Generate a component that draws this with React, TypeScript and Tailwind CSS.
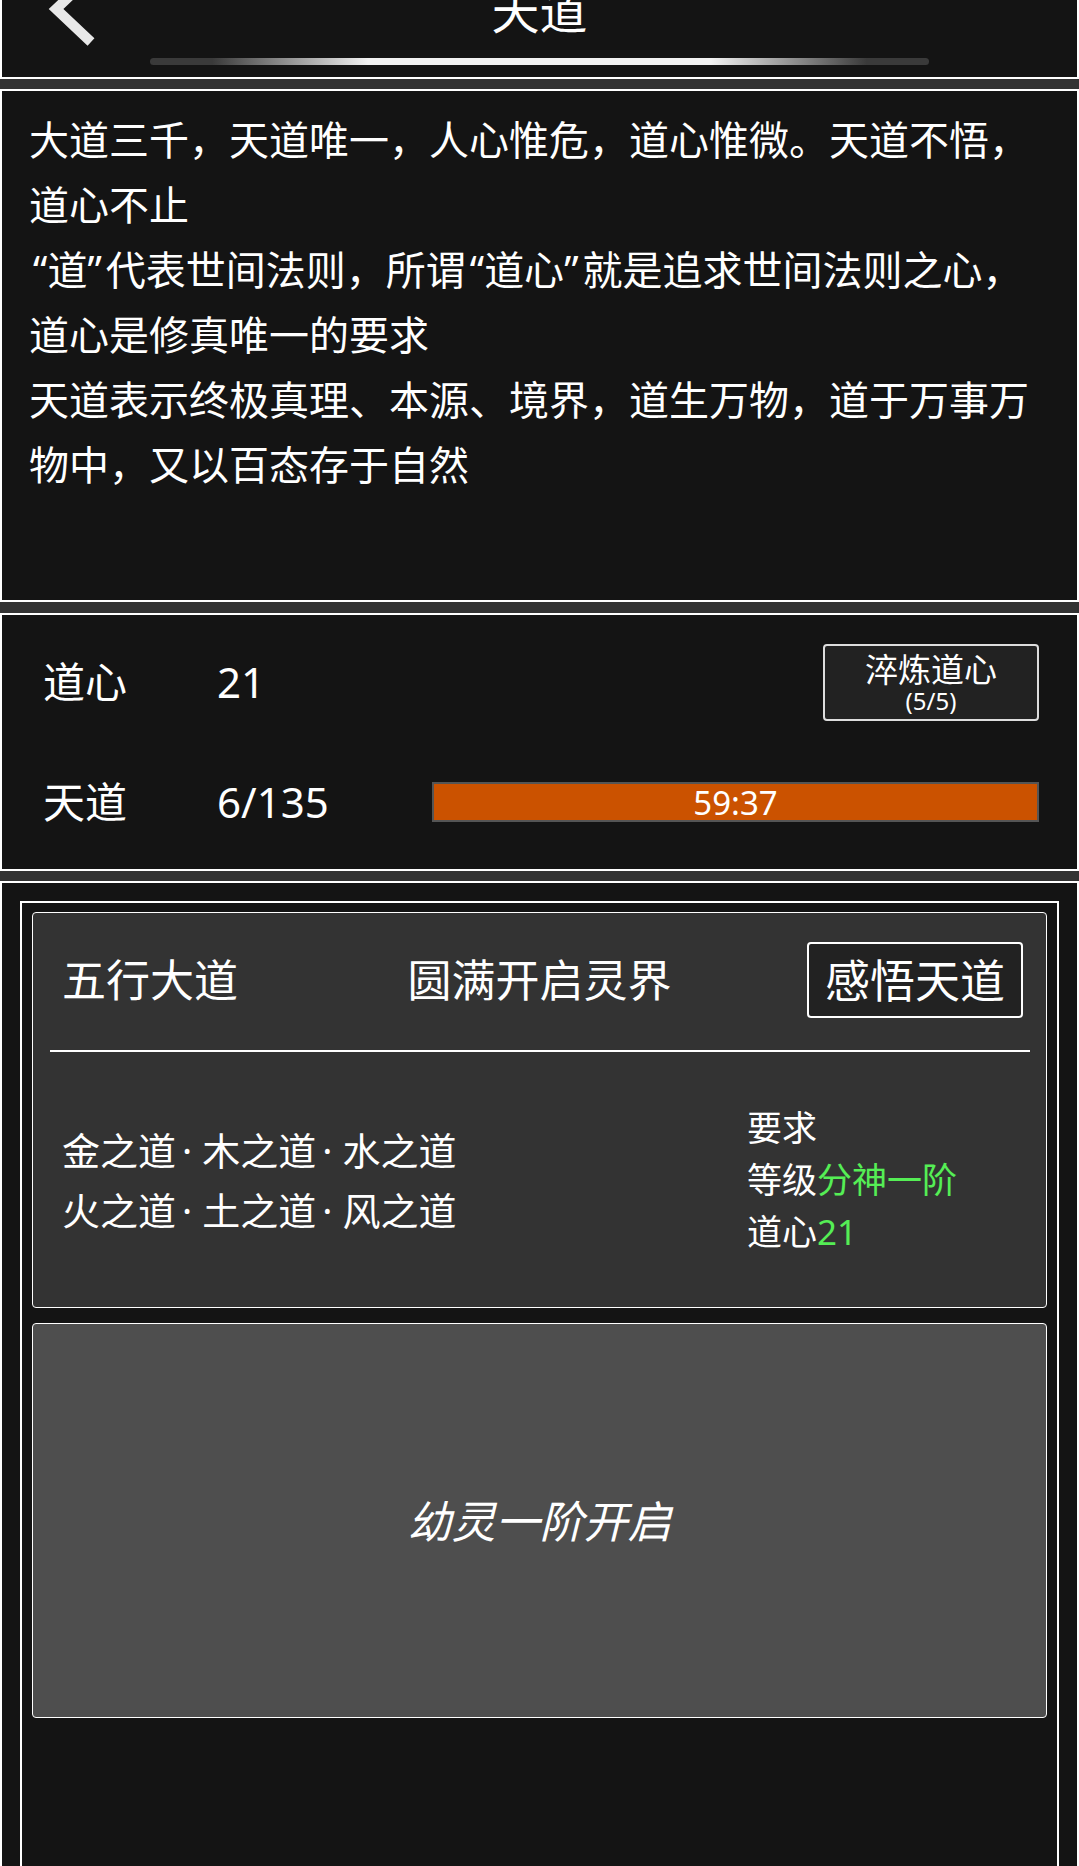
import React from 'react';

const BackIcon = () => (
  <svg width="70" height="50" viewBox="0 0 70 50" className="ml-[30px]">
    <polyline points="59,-24 24,9 59,42" fill="none" stroke="#e8e8e8" strokeWidth="10" strokeLinejoin="miter" />
  </svg>
);

const Dot = () => <span className="ml-[6px] mr-[10px]">·</span>;
const LQ = () => <span className="pl-[4px]">“</span>;
const RQ = () => <span className="pr-[4px]">”</span>;

export default function App() {
  return (
    <div className="w-[1079px] h-[1866px] overflow-hidden bg-[#333333] text-white flex flex-col font-['Noto_Sans','Noto_Sans_CJK_SC',sans-serif]">
      {/* header */}
      <div className="h-[79px] shrink-0 border-x-2 border-b-2 border-white bg-[#141414] flex flex-col">
        <div className="h-[58px] grid grid-cols-[1fr_auto_1fr]">
          <div>
            <BackIcon />
          </div>
          <div className="text-[48px] leading-none -mt-[13px]">天道</div>
          <div />
        </div>
        <div className="h-[7px] mx-[148px] rounded-full bg-[linear-gradient(90deg,#3a3a3a_0%,#3a3a3a_8%,#f2f2f2_28%,#f2f2f2_72%,#3a3a3a_92%,#3a3a3a_100%)]" />
      </div>

      {/* lore text */}
      <div className="mt-[10px] h-[513px] shrink-0 border-2 border-white bg-[#141414] pt-[16px] px-[27px] text-[40px] leading-[65px]">
        <p>大道三千，天道唯一，人心惟危，道心惟微。天道不悟，道心不止</p>
        <p>
          <LQ />道<RQ />代表世间法则，所谓<LQ />道心<RQ />就是追求世间法则之心，道心是修真唯一的要求
        </p>
        <p>天道表示终极真理、本源、境界，道生万物，道于万事万物中，又以百态存于自然</p>
      </div>

      {/* stats */}
      <div className="mt-[11px] shrink-0 border-2 border-white bg-[#141414] py-[7px] pl-[41px] pr-[38px] text-[42px] leading-none">
        <div className="h-[120px] flex items-center">
          <span className="w-[174px]">道心</span>
          <span>21</span>
          <button className="ml-auto w-[216px] h-[77px] bg-[#222222] border-2 border-[#dddddd] rounded-[4px] flex flex-col items-center justify-center">
            <span className="text-[33px] leading-[37px]">淬炼道心</span>
            <span className="text-[24px] leading-[26px]">(5/5)</span>
          </button>
        </div>
        <div className="h-[120px] flex items-center">
          <span className="w-[174px]">天道</span>
          <span>6/135</span>
          <div className="ml-auto w-[607px] h-[40px] border-2 border-[#555555] bg-[#cb5200] flex items-center justify-center text-[33px]">
            59:37
          </div>
        </div>
      </div>

      {/* realms */}
      <div className="mt-[10px] flex-1 flex flex-col border-x-2 border-t-2 border-white bg-[#141414] px-[18px] pt-[18px]">
        <div className="flex-1 border-x-2 border-t-2 border-white pt-[9px] px-[10px]">
          <div className="h-[396px] flex flex-col rounded-[4px] border border-white bg-[#333333]">
            <div className="mt-[29px] h-[76px] px-[23px] grid grid-cols-[1fr_auto_1fr] items-center">
              <span className="pl-[6px] text-[44px] leading-none">五行大道</span>
              <span className="text-[44px] leading-none">圆满开启灵界</span>
              <button className="justify-self-end w-[216px] h-[76px] rounded-[4px] border-2 border-white bg-[#222222] text-[45px] leading-none">
                感悟天道
              </button>
            </div>
            <div className="mt-[32px] h-[2px] ml-[17px] mr-[16px] bg-white" />
            <div className="flex-1 flex items-center">
              <div className="flex-1 pl-[29px] text-[38px] leading-[60px]">
                <p>
                  金之道<Dot />木之道<Dot />水之道
                </p>
                <p>
                  火之道<Dot />土之道<Dot />风之道
                </p>
              </div>
              <div className="w-[299px] text-[35px] leading-[52px]">
                <p>要求</p>
                <p>
                  等级<span className="text-[#55ee55]">分神一阶</span>
                </p>
                <p>
                  道心<span className="text-[#55ee55]">21</span>
                </p>
              </div>
            </div>
          </div>
          <div className="mt-[15px] h-[395px] rounded-[4px] border border-white bg-[#4e4e4e] flex items-center justify-center">
            <span className="text-[44px] italic">幼灵一阶开启</span>
          </div>
        </div>
      </div>
    </div>
  );
}
